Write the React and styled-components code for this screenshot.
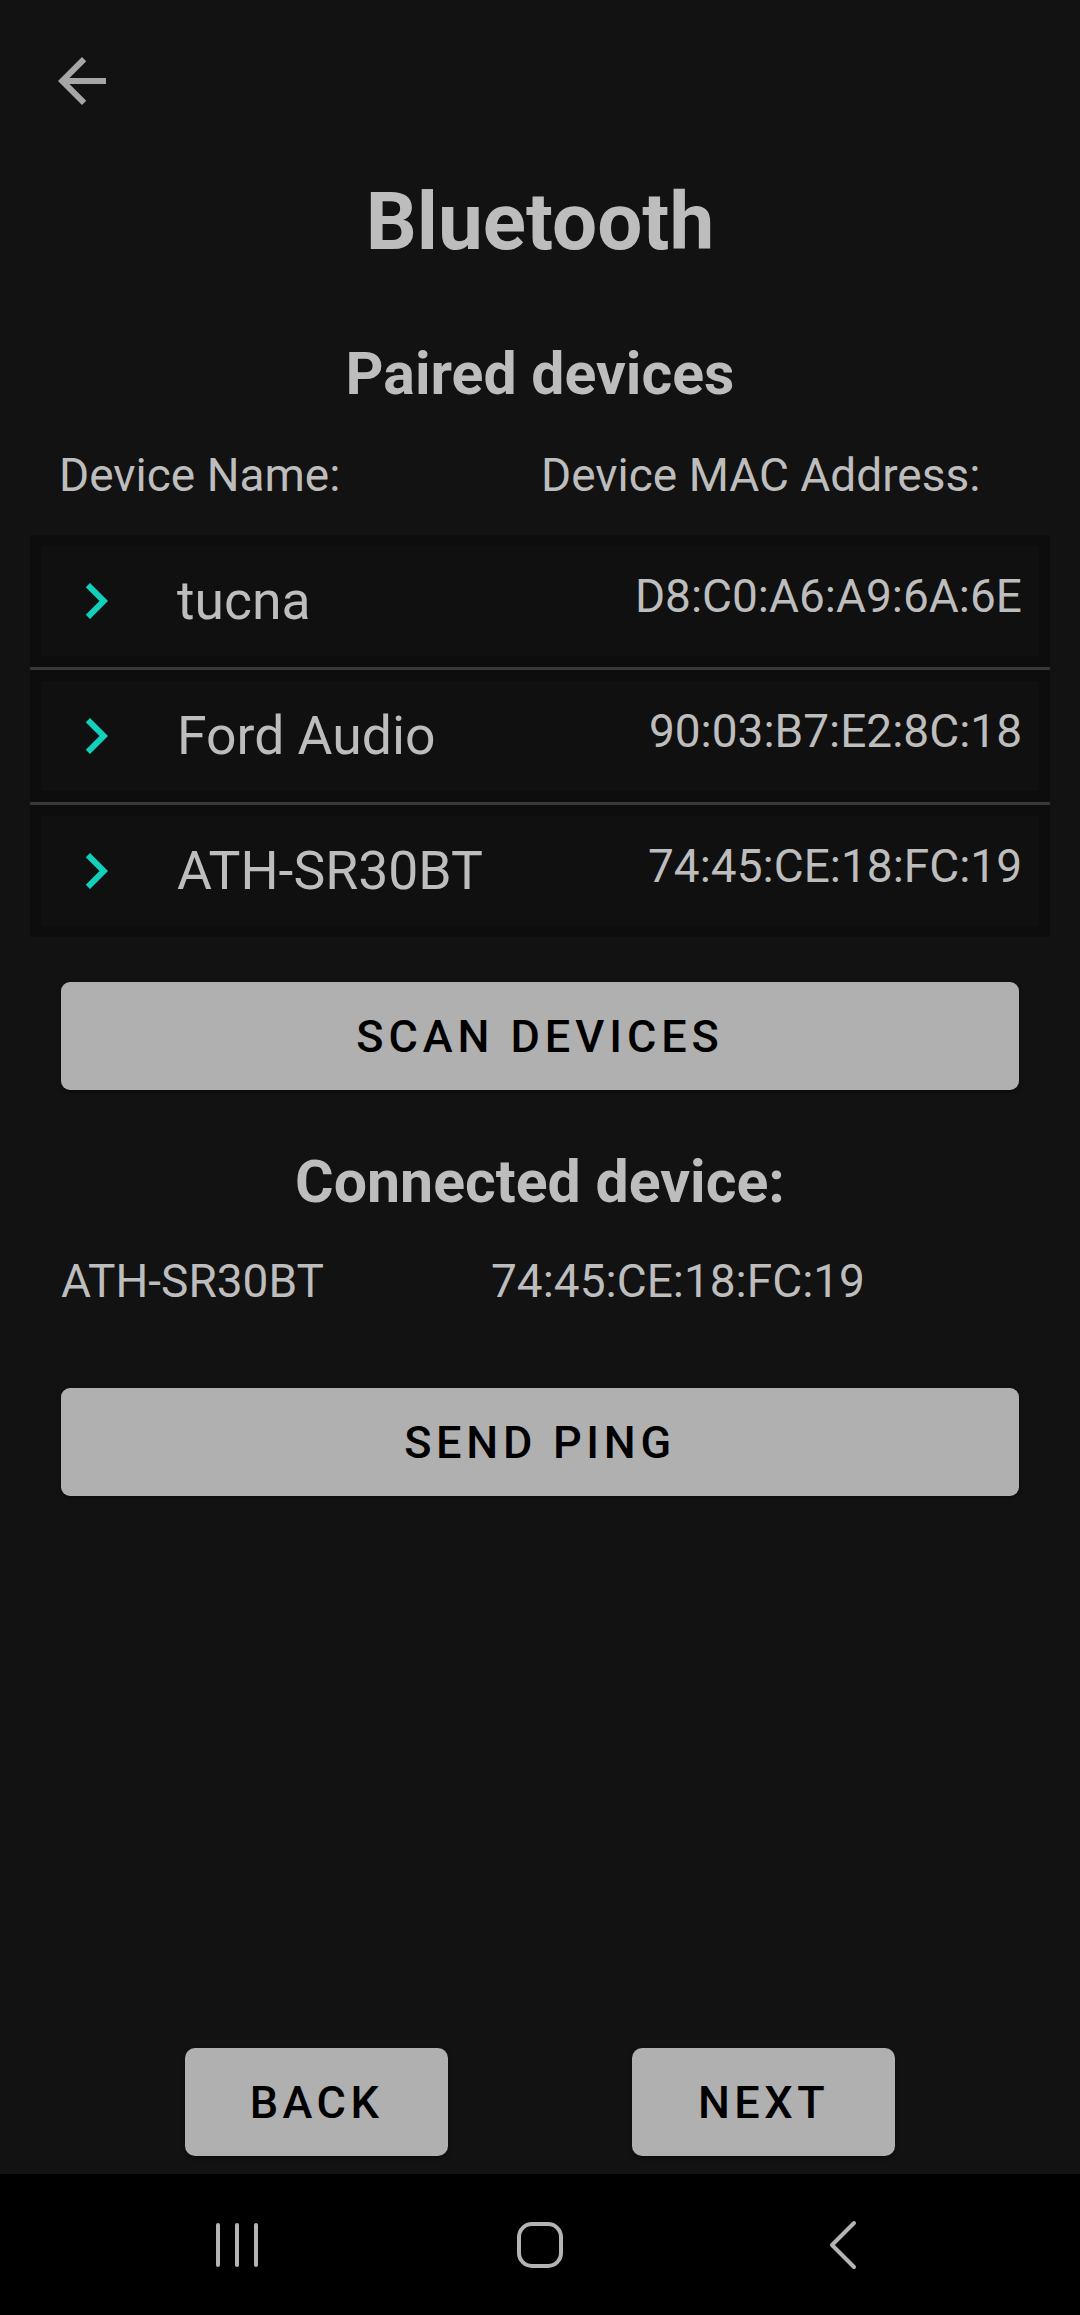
import React from "react";
import styled, { createGlobalStyle } from "styled-components";

const GlobalStyle = createGlobalStyle`
  html, body {
    margin: 0;
    padding: 0;
    background: #121212;
  }
  * {
    box-sizing: border-box;
  }
`;

const pairedDevices = [
  { name: "tucna", mac: "D8:C0:A6:A9:6A:6E" },
  { name: "Ford Audio", mac: "90:03:B7:E2:8C:18" },
  { name: "ATH-SR30BT", mac: "74:45:CE:18:FC:19" },
];

const ArrowBack = () => (
  <svg width="72" height="72" viewBox="0 0 24 24">
    <path
      fill="#a6a6a6"
      d="M20 11H7.83l5.59-5.59L12 4l-8 8 8 8 1.41-1.41L7.83 13H20v-2z"
    />
  </svg>
);

const Chevron = () => (
  <svg width="72" height="72" viewBox="0 0 24 24">
    <path fill="#12d0bc" d="M10 6L8.59 7.41 13.17 12l-4.58 4.59L10 18l6-6z" />
  </svg>
);

const App = () => {
  return (
    <S.Screen>
      <GlobalStyle />
      <S.TopBar>
        <ArrowBack />
      </S.TopBar>
      <S.Title>Bluetooth</S.Title>

      <S.SectionTitle $top={66}>Paired devices</S.SectionTitle>
      <S.ColumnHeader>
        <S.HeaderCell>Device Name:</S.HeaderCell>
        <S.HeaderCell>Device MAC Address:</S.HeaderCell>
      </S.ColumnHeader>

      <S.List>
        {pairedDevices.map((d) => (
          <S.Cell key={d.mac}>
            <S.Card>
              <Chevron />
              <S.DeviceName>{d.name}</S.DeviceName>
              <S.DeviceMac>{d.mac}</S.DeviceMac>
            </S.Card>
          </S.Cell>
        ))}
      </S.List>

      <S.WideButton $top={45} $spacing={0.11}>
        SCAN DEVICES
      </S.WideButton>

      <S.SectionTitle $top={56}>Connected device:</S.SectionTitle>
      <S.ConnectedRow>
        <S.ConnectedName>ATH-SR30BT</S.ConnectedName>
        <S.ConnectedMac>74:45:CE:18:FC:19</S.ConnectedMac>
      </S.ConnectedRow>

      <S.WideButton $top={79} $spacing={0.105}>
        SEND PING
      </S.WideButton>

      <S.Spacer />

      <S.BottomActions>
        <S.SmallButton>BACK</S.SmallButton>
        <S.SmallButton>NEXT</S.SmallButton>
      </S.BottomActions>

      <S.NavBar>
        <svg width="60" height="60" viewBox="0 0 60 60">
          <g stroke="#b4b4b4" strokeWidth="4" strokeLinecap="round">
            <line x1="11" y1="10" x2="11" y2="50" />
            <line x1="30" y1="10" x2="30" y2="50" />
            <line x1="49" y1="10" x2="49" y2="50" />
          </g>
        </svg>
        <svg width="60" height="60" viewBox="0 0 60 60">
          <rect
            x="9"
            y="9"
            width="42"
            height="42"
            rx="13"
            fill="none"
            stroke="#b4b4b4"
            strokeWidth="4"
          />
        </svg>
        <svg width="60" height="60" viewBox="0 0 60 60">
          <polyline
            points="41,8 19,30 41,52"
            fill="none"
            stroke="#b4b4b4"
            strokeWidth="4"
            strokeLinecap="round"
            strokeLinejoin="round"
          />
        </svg>
      </S.NavBar>
    </S.Screen>
  );
};

const S = {
  Screen: styled.div`
    width: 1080px;
    min-height: 2315px;
    display: flex;
    flex-direction: column;
    background: #121212;
    font-family: Roboto, "Noto Sans", sans-serif;
    color: #bdbdbd;
  `,
  TopBar: styled.div`
    height: 172px;
    padding: 45px 0 0 46px;
  `,
  Title: styled.div`
    font-size: 80px;
    line-height: 100px;
    font-weight: 700;
    text-align: center;
  `,
  SectionTitle: styled.div`
    margin-top: ${(p) => p.$top}px;
    font-size: 59px;
    line-height: 72px;
    font-weight: 700;
    text-align: center;
  `,
  ColumnHeader: styled.div`
    margin-top: 37px;
    display: grid;
    grid-template-columns: 482px 1fr;
    padding-left: 59px;
    font-size: 46px;
    line-height: 56px;
  `,
  HeaderCell: styled.span``,
  List: styled.div`
    margin: 32px 30px 0;
    display: flex;
    flex-direction: column;
  `,
  Cell: styled.div`
    padding: 11px;
    background: #0d0d0d;
    border-bottom: 3px solid #383838;
    &:last-child {
      border-bottom: none;
    }
  `,
  Card: styled.div`
    height: 110px;
    display: flex;
    align-items: center;
    padding: 0 17px 0 19px;
    background: #101010;
  `,
  DeviceName: styled.span`
    margin-left: 45px;
    flex: 1;
    font-size: 53.5px;
    line-height: 62px;
  `,
  DeviceMac: styled.span`
    font-size: 46px;
    line-height: 56px;
    margin-bottom: 10px;
  `,
  WideButton: styled.div`
    margin: ${(p) => p.$top}px 61px 0;
    height: 108px;
    border-radius: 9px;
    background: #b0b0b0;
    color: #000;
    display: flex;
    align-items: center;
    justify-content: center;
    font-size: 45px;
    font-weight: 500;
    letter-spacing: ${(p) => p.$spacing}em;
    box-shadow: 0 2px 4px rgba(0, 0, 0, 0.4);
  `,
  ConnectedRow: styled.div`
    margin-top: 35px;
    display: grid;
    grid-template-columns: 430px 1fr;
    padding-left: 61px;
    font-size: 46px;
    line-height: 56px;
  `,
  ConnectedName: styled.span``,
  ConnectedMac: styled.span``,
  Spacer: styled.div`
    flex: 1;
  `,
  BottomActions: styled.div`
    display: flex;
    justify-content: center;
    gap: 184px;
    padding-bottom: 18px;
  `,
  SmallButton: styled.div`
    width: 263px;
    height: 108px;
    border-radius: 10px;
    background: #b0b0b0;
    color: #000;
    display: flex;
    align-items: center;
    justify-content: center;
    font-size: 45px;
    font-weight: 500;
    letter-spacing: 0.1em;
    box-shadow: 0 2px 4px rgba(0, 0, 0, 0.4);
  `,
  NavBar: styled.div`
    height: 141px;
    background: #000;
    display: flex;
    justify-content: center;
    align-items: center;
    gap: 243px;
  `,
};

export default App;
